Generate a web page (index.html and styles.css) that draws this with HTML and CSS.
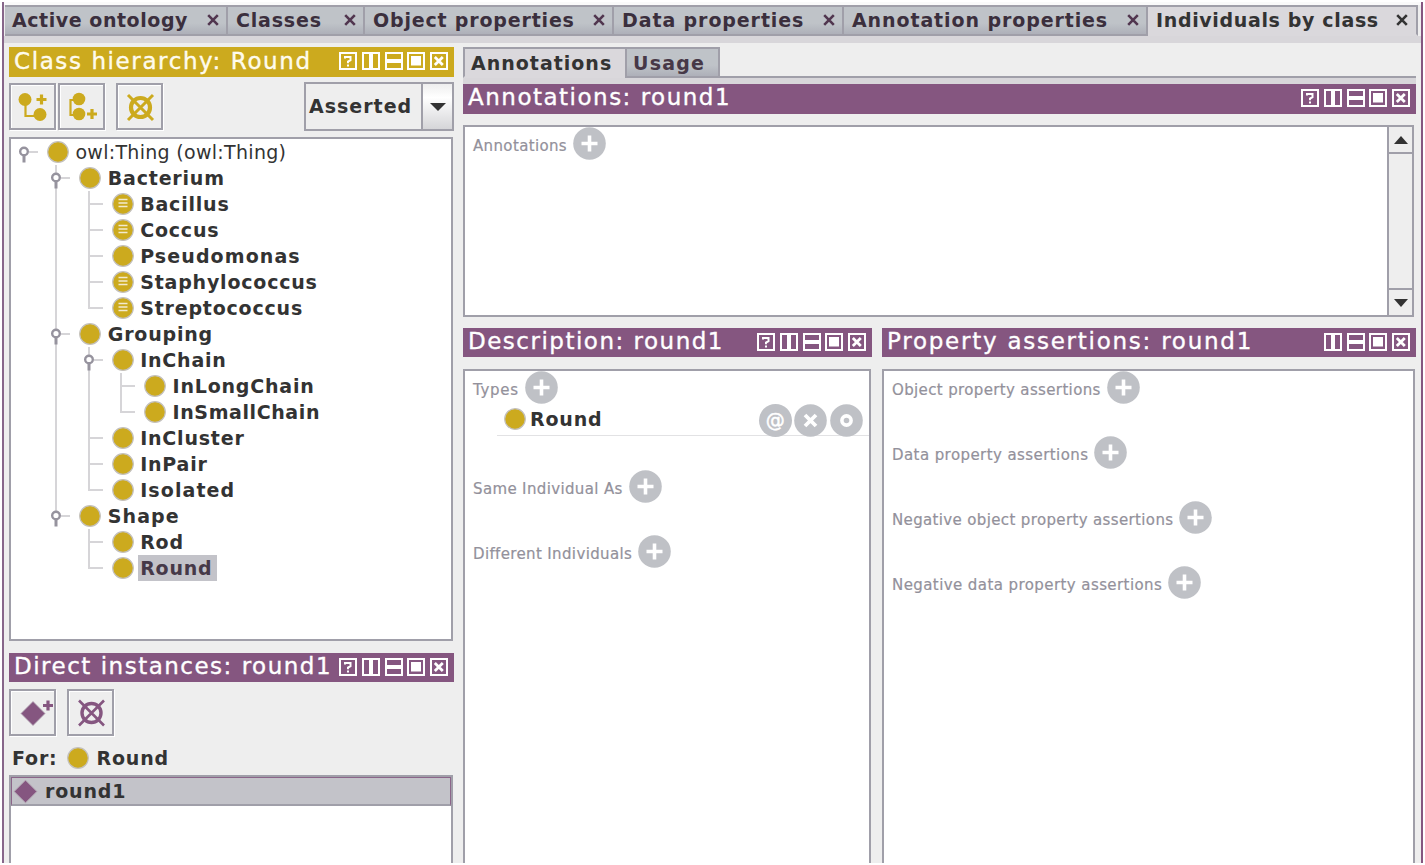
FILE: index.html
```html
<!DOCTYPE html>
<html lang="en">
<head>
<meta charset="utf-8">
<title>Individuals by class</title>
<link rel="stylesheet" href="styles.css">
</head>
<body>
<svg class="defs" aria-hidden="true">
  <symbol id="i-help" viewBox="0 0 18 18"><rect x="1" y="1" width="16" height="16" fill="none" stroke="#fff" stroke-width="2"/><path d="M6 6.500V5h5.500v3.200L9 9.600v1.600M9 12.600v2" fill="none" stroke="#fff" stroke-width="2"/></symbol>
  <symbol id="i-cols" viewBox="0 0 18 18"><rect x="1" y="1" width="16" height="16" fill="none" stroke="#fff" stroke-width="2"/><path d="M9 1v16" stroke="#fff" stroke-width="4"/></symbol>
  <symbol id="i-rows" viewBox="0 0 18 18"><rect x="1" y="1" width="16" height="16" fill="none" stroke="#fff" stroke-width="2"/><path d="M1 9h16" stroke="#fff" stroke-width="4"/></symbol>
  <symbol id="i-max" viewBox="0 0 18 18"><rect x="1" y="1" width="16" height="16" fill="none" stroke="#fff" stroke-width="2"/><rect x="4" y="4" width="10" height="9.500" fill="#fff"/></symbol>
  <symbol id="i-close" viewBox="0 0 18 18"><rect x="1" y="1" width="16" height="16" fill="none" stroke="#fff" stroke-width="2"/><path d="M4.800 5l8 8M12.800 5l-8 8" stroke="#fff" stroke-width="2.800"/></symbol>
  <symbol id="i-x" viewBox="0 0 12 12"><path d="M1.200 1.200l9.600 9.600M10.800 1.200L1.200 10.800" stroke="currentColor" stroke-width="2.600"/></symbol>
  <symbol id="i-class" viewBox="0 0 22 22"><circle cx="11" cy="11" r="10.300" fill="#ccaa1e" stroke="#c3c0bc" stroke-width="1.200"/></symbol>
  <symbol id="i-defined" viewBox="0 0 22 22"><circle cx="11" cy="11" r="10.300" fill="#ccaa1e" stroke="#c3c0bc" stroke-width="1.200"/><path d="M6.500 6.500h9M6.500 10h9M6.500 13.500h9" stroke="#f2ead0" stroke-width="1.700"/></symbol>
  <symbol id="i-knob" viewBox="0 0 32.400 26"><path d="M13 13h9" stroke="#d6d5d8" stroke-width="2"/><path d="M8 16v7.500" stroke="#96939e" stroke-width="3"/><circle cx="8" cy="12.500" r="3.800" fill="#fff" stroke="#96939e" stroke-width="2.400"/></symbol>
  <symbol id="i-add" viewBox="0 0 33 33"><circle cx="16.500" cy="16.500" r="16.300" fill="#bfc1c6"/><path d="M16.500 8.500v16M8.500 16.500h16" stroke="#fff" stroke-width="3.600"/></symbol>
  <symbol id="i-del" viewBox="0 0 33 33"><circle cx="16.500" cy="16.500" r="16.300" fill="#bfc1c6"/><path d="M11 11l11 11M22 11L11 22" stroke="#fff" stroke-width="3.800"/></symbol>
  <symbol id="i-edit" viewBox="0 0 33 33"><circle cx="16.500" cy="16.500" r="16.300" fill="#bfc1c6"/><circle cx="16.500" cy="16.500" r="4.600" fill="none" stroke="#fff" stroke-width="3.600"/></symbol>
  <symbol id="i-diamond" viewBox="0 0 26 26"><path d="M13 1.200L24.800 13 13 24.800 1.200 13z" fill="#855680" stroke="#b3a5b3" stroke-width="1"/></symbol>
</svg>
<div class="app">
  <nav class="tabs">
    <div class="tab t1"><span>Active ontology</span><svg><use href="#i-x"/></svg></div>
    <div class="tab t2"><span>Classes</span><svg><use href="#i-x"/></svg></div>
    <div class="tab t3"><span>Object properties</span><svg><use href="#i-x"/></svg></div>
    <div class="tab t4"><span>Data properties</span><svg><use href="#i-x"/></svg></div>
    <div class="tab t5"><span>Annotation properties</span><svg><use href="#i-x"/></svg></div>
    <div class="tab t6 active"><span>Individuals by class</span><svg><use href="#i-x"/></svg></div>
  </nav>
  <div class="strip"></div>
  <main class="work">
    <section class="left">
      <header class="title gold"><h2>Class hierarchy: Round</h2><div class="ctl"><svg><use href="#i-help"/></svg><svg><use href="#i-cols"/></svg><svg><use href="#i-rows"/></svg><svg><use href="#i-max"/></svg><svg><use href="#i-close"/></svg></div></header>
      <div class="toolbar">
        <button class="btn"><svg viewBox="0 0 43 43"><path d="M14.500 14v17h14" fill="none" stroke="#ccaa1e" stroke-width="2.200"/><circle cx="14" cy="14.500" r="6.500" fill="#ccaa1e"/><circle cx="29" cy="29.500" r="6.500" fill="#ccaa1e"/><path d="M30.500 9.500v10M25.500 14.500h10" stroke="#ccaa1e" stroke-width="3.200"/></svg></button>
        <button class="btn b2"><svg viewBox="0 0 43 43"><path d="M19 15h-8.500v15h8.500" fill="none" stroke="#ccaa1e" stroke-width="2.200"/><circle cx="19" cy="14" r="6.300" fill="#ccaa1e"/><circle cx="19" cy="29" r="6.300" fill="#ccaa1e"/><path d="M32 24v10M27 29h10" stroke="#ccaa1e" stroke-width="3.200"/></svg></button>
        <button class="btn b3"><svg viewBox="0 0 43 43"><g fill="none" stroke="#ccaa1e"><circle cx="22.500" cy="22.500" r="9.500" stroke-width="4.200"/><path d="M10 10l25 25M35 10l-25 25" stroke-width="3"/></g></svg></button>
        <div class="combo"><span>Asserted</span><i><svg viewBox="0 0 18 10"><path d="M1 1h16L9 9z" fill="#333"/></svg></i></div>
      </div>
      <div class="tree">
        <div class="row"><svg class="k"><use href="#i-knob"/></svg><svg class="c"><use href="#i-class"/></svg><span class="root">owl:Thing (owl:Thing)</span></div>
        <div class="row"><b></b><svg class="k v"><use href="#i-knob"/></svg><svg class="c"><use href="#i-class"/></svg><span>Bacterium</span></div>
        <div class="row"><b></b><b class="v"></b><b class="v h"></b><svg class="c"><use href="#i-defined"/></svg><span>Bacillus</span></div>
        <div class="row"><b></b><b class="v"></b><b class="v h"></b><svg class="c"><use href="#i-defined"/></svg><span>Coccus</span></div>
        <div class="row"><b></b><b class="v"></b><b class="v h"></b><svg class="c"><use href="#i-class"/></svg><span class="wide">Pseudomonas</span></div>
        <div class="row"><b></b><b class="v"></b><b class="v h"></b><svg class="c"><use href="#i-defined"/></svg><span>Staphylococcus</span></div>
        <div class="row"><b></b><b class="v"></b><b class="e h"></b><svg class="c"><use href="#i-defined"/></svg><span>Streptococcus</span></div>
        <div class="row"><b></b><svg class="k v"><use href="#i-knob"/></svg><svg class="c"><use href="#i-class"/></svg><span>Grouping</span></div>
        <div class="row"><b></b><b class="v"></b><svg class="k v"><use href="#i-knob"/></svg><svg class="c"><use href="#i-class"/></svg><span>InChain</span></div>
        <div class="row"><b></b><b class="v"></b><b class="v"></b><b class="v h"></b><svg class="c"><use href="#i-class"/></svg><span>InLongChain</span></div>
        <div class="row"><b></b><b class="v"></b><b class="v"></b><b class="e h"></b><svg class="c"><use href="#i-class"/></svg><span class="narrow">InSmallChain</span></div>
        <div class="row"><b></b><b class="v"></b><b class="v h"></b><svg class="c"><use href="#i-class"/></svg><span>InCluster</span></div>
        <div class="row"><b></b><b class="v"></b><b class="v h"></b><svg class="c"><use href="#i-class"/></svg><span>InPair</span></div>
        <div class="row"><b></b><b class="v"></b><b class="e h"></b><svg class="c"><use href="#i-class"/></svg><span class="wide">Isolated</span></div>
        <div class="row"><b></b><svg class="k e"><use href="#i-knob"/></svg><svg class="c"><use href="#i-class"/></svg><span class="wide">Shape</span></div>
        <div class="row"><b></b><b></b><b class="v h"></b><svg class="c"><use href="#i-class"/></svg><span>Rod</span></div>
        <div class="row"><b></b><b></b><b class="e h"></b><svg class="c"><use href="#i-class"/></svg><span class="sel">Round</span></div>
      </div>
      <header class="title second"><h2>Direct instances: round1</h2><div class="ctl"><svg><use href="#i-help"/></svg><svg><use href="#i-cols"/></svg><svg><use href="#i-rows"/></svg><svg><use href="#i-max"/></svg><svg><use href="#i-close"/></svg></div></header>
      <div class="toolbar low">
        <button class="btn"><svg viewBox="0 0 43 43"><path d="M22 10.500L34 22.500 22 34.500 10 22.500z" fill="#855680" stroke="#b3a5b3" stroke-width=".8"/><path d="M37 9.500v10M32 14.500h10" stroke="#855680" stroke-width="3.200"/></svg></button>
        <button class="btn b4"><svg viewBox="0 0 43 43"><g fill="none" stroke="#855680"><circle cx="22.500" cy="22" r="9.500" stroke-width="3.400"/><path d="M10 9.500l25 25M35 9.500l-25 25" stroke-width="2.600"/></g></svg></button>
      </div>
      <div class="for"><span>For:</span><svg class="c"><use href="#i-class"/></svg><span>Round</span></div>
      <div class="list"><div class="item"><svg><use href="#i-diamond"/></svg><span>round1</span></div></div>
    </section>
    <section class="right">
      <nav class="subtabs"><div class="sub on">Annotations</div><div class="sub off">Usage</div><div class="rest"></div></nav>
      <div class="substrip"></div>
      <header class="title"><h2>Annotations: round1</h2><div class="ctl"><svg><use href="#i-help"/></svg><svg><use href="#i-cols"/></svg><svg><use href="#i-rows"/></svg><svg><use href="#i-max"/></svg><svg><use href="#i-close"/></svg></div></header>
      <div class="annbox">
        <div class="line"><span>Annotations</span><svg><use href="#i-add"/></svg></div>
        <div class="scroll"><i><svg viewBox="0 0 14 8"><path d="M0 8h14L7 0z" fill="#333"/></svg></i><i><svg viewBox="0 0 14 8"><path d="M0 0h14L7 8z" fill="#333"/></svg></i></div>
      </div>
      <div class="pair">
        <div class="desc">
          <header class="title"><h2>Description: round1</h2><div class="ctl"><svg><use href="#i-help"/></svg><svg><use href="#i-cols"/></svg><svg><use href="#i-rows"/></svg><svg><use href="#i-max"/></svg><svg><use href="#i-close"/></svg></div></header>
          <div class="box">
            <div class="line types"><span>Types</span><svg><use href="#i-add"/></svg></div>
            <div class="type"><svg class="c"><use href="#i-class"/></svg><span>Round</span><div class="acts"><em>@</em><svg><use href="#i-del"/></svg><svg><use href="#i-edit"/></svg></div></div>
            <div class="line same"><span>Same Individual As</span><svg><use href="#i-add"/></svg></div>
            <div class="line diff"><span>Different Individuals</span><svg><use href="#i-add"/></svg></div>
          </div>
        </div>
        <div class="prop">
          <header class="title"><h2>Property assertions: round1</h2><div class="ctl"><svg><use href="#i-cols"/></svg><svg><use href="#i-rows"/></svg><svg><use href="#i-max"/></svg><svg><use href="#i-close"/></svg></div></header>
          <div class="box">
            <div class="line"><span>Object property assertions</span><svg><use href="#i-add"/></svg></div>
            <div class="line data"><span>Data property assertions</span><svg><use href="#i-add"/></svg></div>
            <div class="line"><span>Negative object property assertions</span><svg><use href="#i-add"/></svg></div>
            <div class="line data"><span>Negative data property assertions</span><svg><use href="#i-add"/></svg></div>
          </div>
        </div>
      </div>
    </section>
  </main>
</div>
</body>
</html>
```
FILE: styles.css
```css
* { box-sizing: border-box; }
body { margin: 0; height: 865px; overflow: hidden; background: #fff; padding: 2px; font: bold 19px/26px "DejaVu Sans", sans-serif; letter-spacing: .82px; color: #333; white-space: nowrap; }
svg { display: block; flex: none; }
.defs { position: absolute; width: 0; height: 0; }
.app { height: 861px; border-left: 2px solid #87668a; border-right: 2px solid #855680; background: #eee; display: flex; flex-direction: column; padding-top: 3px; box-shadow: inset 0 3px #fafafa; }
.tabs { display: flex; height: 31px; flex: none; padding-left: 1px; }
.tab { display: flex; justify-content: space-between; align-items: center; border: 2px solid #a09fa9; border-left-width: 0; background: linear-gradient(#bfc3c8 60%, #aeb0b9); padding: 0 7px 1px 8px; color: #3b2f3d; }
.tab svg { width: 12px; height: 12px; color: #51364f; }
.t1 { width: 223px; padding-left: 7px; letter-spacing: .55px; }
.t2 { width: 137px; }
.t3 { width: 249px; }
.t4 { width: 230px; letter-spacing: .9px; }
.t5 { width: 304px; letter-spacing: .9px; }
.t6 { width: 270px; letter-spacing: .65px; }
.tab.active { background: #dad8dc; border-bottom-color: #dad8dc; padding-right: 8px; color: #333; }
.tab.active svg { color: #333; }
.strip { height: 7px; flex: none; background: #d8d6da; }
.work { flex: 1; display: flex; gap: 9px; padding: 4px 5px 0; min-height: 0; }
.left { width: 445px; display: flex; flex-direction: column; }
.right { width: 953px; display: flex; flex-direction: column; }
.title { height: 30px; flex: none; background: #855680; display: flex; justify-content: space-between; padding: 0 6px 0 5px; }
.title.gold { background: #ccaa1e; }
h2 { margin: 0; font: 23px/27px "DejaVu Sans", sans-serif; letter-spacing: 1.5px; color: #fff; -webkit-text-stroke: .35px #fff; }
.gold h2 { letter-spacing: 1.6px; color: #fffbe8; line-height: 28px; }
.ctl { display: flex; gap: 4.7px; padding-top: 5px; }
.ctl svg { width: 18px; height: 18px; }
.toolbar { display: flex; padding-top: 6px; height: 60px; flex: none; }
.btn { width: 47px; height: 47px; padding: 0; border: 2px solid #a09fa9; background: #eee; box-shadow: inset 1px 1px #fff, 1px 1px #fff; }
.btn svg { width: 43px; height: 43px; }
.b2 { margin-left: 2px; }
.b3 { margin-left: 11px; }
.b4 { margin-left: 11px; }
.combo { margin-left: auto; width: 150px; height: 49px; margin-top: -1px; border: 2px solid #a09fa9; display: flex; line-height: 45px; padding-left: 3px; letter-spacing: 1px; }
.combo i { margin-left: auto; width: 31px; border-left: 2px solid #a09fa9; background: linear-gradient(#eee, #fff 30%, #d5d5d8); display: grid; place-items: center; }
.combo i svg { width: 18px; height: 10px; }
.tree { width: 444px; height: 504px; flex: none; background: #fff; border: 2px solid #a09fa9; padding-left: 5px; }
.row { display: flex; height: 26px; }
.row b, .row .k { width: 32.4px; height: 26px; flex: none; background-repeat: no-repeat; }
.v { background-image: linear-gradient(#d6d5d8, #d6d5d8); background-size: 2px 100%; background-position: 7px 0; }
.e { background-image: linear-gradient(#d6d5d8, #d6d5d8); background-size: 2px 14px; background-position: 7px 0; }
.v.h { background-image: linear-gradient(#d6d5d8, #d6d5d8), linear-gradient(#d6d5d8, #d6d5d8); background-size: 2px 100%, 15px 2px; background-position: 7px 0, 7px 12px; }
.e.h { background-image: linear-gradient(#d6d5d8, #d6d5d8), linear-gradient(#d6d5d8, #d6d5d8); background-size: 2px 14px, 15px 2px; background-position: 7px 0, 7px 12px; }
.c { width: 22px; height: 22px; }
.row .c { margin: 2px 0 0 -1.500px; }
.row span { padding: 0 3px 0 2px; margin-left: 4.500px; letter-spacing: .8px; }
.row .wide { letter-spacing: 1.1px; }
.row .narrow { letter-spacing: .6px; }
.row .root { font-weight: normal; letter-spacing: .3px; }
.row .sel { background: #c3c3c9; color: #463948; padding-right: 4px; }
.second { margin-top: 12px; height: 29px; }
.low { height: 62px; padding-top: 7px; }
.for { display: flex; align-items: center; height: 28px; flex: none; padding-left: 3px; margin-bottom: 3px; }
.for .c { margin: 0 8px 0 9px; }
.list { width: 444px; flex: 1; background: #fff; border: 2px solid #a09fa9; border-bottom: 0; }
.item { height: 29px; display: flex; align-items: center; background: #c3c3c9; border: 1px solid #8b6589; border-bottom: 2px solid #a09fa9; }
.item svg { width: 25px; height: 25px; margin: 0 7px 0 1px; }
.subtabs { display: flex; height: 31px; flex: none; }
.sub { border: 2px solid #a09fa9; line-height: 28px; padding-left: 6px; }
.on { width: 162px; background: #dad8dc; border-bottom-color: #dad8dc; border-right: 0; letter-spacing: 1px; }
.off { width: 95px; background: linear-gradient(#bfc3c8 60%, #aeb0b9); color: #473847; letter-spacing: 1.2px; }
.rest { flex: 1; border-bottom: 2px solid #a09fa9; }
.substrip { height: 6px; flex: none; background: #d8d6da; }
.annbox { margin-top: 11px; height: 192px; width: 951px; flex: none; background: #fff; border: 2px solid #a09fa9; display: flex; justify-content: space-between; }
.line { display: flex; height: 33px; font-weight: normal; font-size: 15px; letter-spacing: .36px; color: #93919b; padding-left: 8px; -webkit-text-stroke: .2px #93919b; }
.line span { line-height: 38px; margin-right: 6px; }
.line svg { width: 33px; height: 33px; }
.types { letter-spacing: .7px; }
.data { letter-spacing: .42px; }
.scroll { width: 25px; border-left: 2px solid #a09fa9; background: #eee; display: flex; flex-direction: column; justify-content: space-between; }
.scroll i { height: 27px; display: grid; place-items: center; border-bottom: 2px solid #a09fa9; }
.scroll i + i { border-bottom: 0; border-top: 2px solid #a09fa9; }
.scroll svg { width: 14px; height: 8px; }
.pair { display: flex; gap: 10px; flex: 1; margin-top: 11px; }
.desc, .prop { display: flex; flex-direction: column; }
.pair .title { height: 29px; }
.desc { width: 409px; }
.prop { width: 534px; }
.prop h2 { letter-spacing: 1.75px; }
.box { flex: 1; margin: 12px 1px 0 0; background: #fff; border: 2px solid #a09fa9; border-bottom: 0; }
.type { display: flex; height: 32px; margin-left: 32px; border-bottom: 1px solid #e2e2e4; padding-left: 7px; }
.type .c { margin: 4px 4px 0 0; }
.type > span { line-height: 30px; }
.acts { display: flex; gap: 2.700px; margin: 0 6px 0 auto; }
.acts svg, .acts em { width: 33px; height: 33px; }
.acts em { border-radius: 50%; background: #bfc1c6; color: #fff; font: 19px/32px "DejaVu Sans", sans-serif; text-align: center; letter-spacing: 0; -webkit-text-stroke: .5px #fff; }
.same { margin-top: 34px; }
.diff { margin-top: 32px; }
.prop .line + .line { margin-top: 32px; }
```
